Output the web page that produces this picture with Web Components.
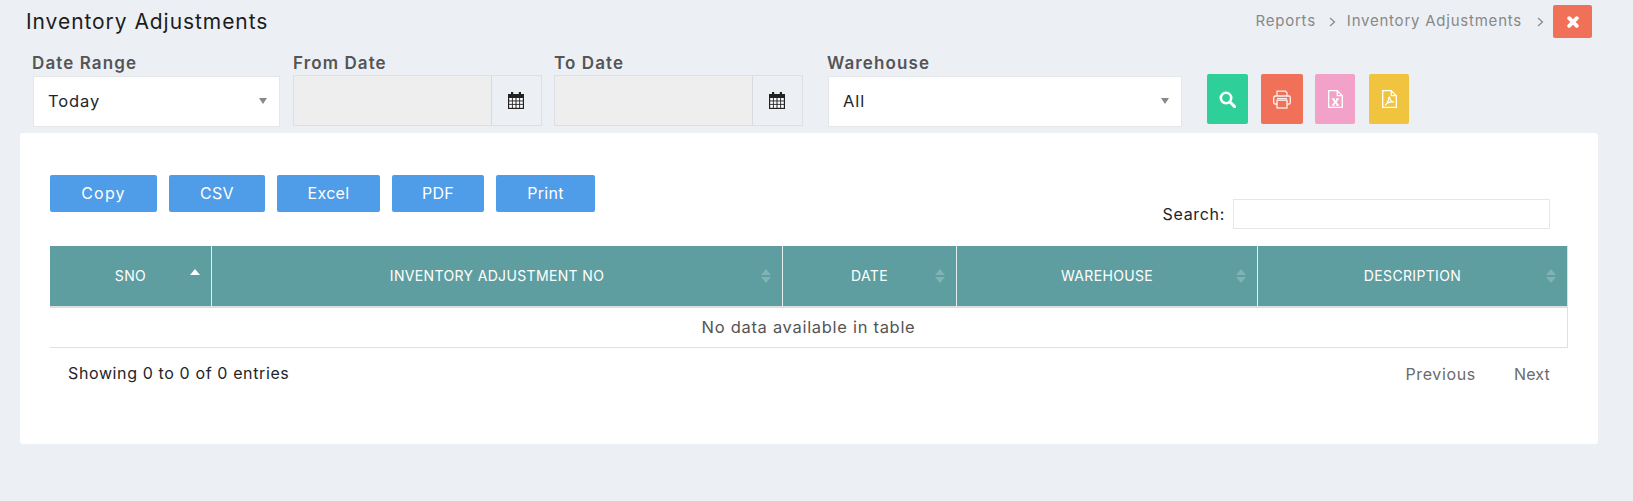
<!DOCTYPE html>
<html>
<head>
<meta charset="utf-8">
<title>Inventory Adjustments</title>
<style>
    html, body { margin: 0; padding: 0; background: #ecf0f5; }
    body { font-family: "Inter", "Noto Sans", sans-serif; width: 1633px; height: 501px; overflow: hidden; }
</style>
</head>
<body>
<page-header title-text="Inventory Adjustments"></page-header>
<filter-bar></filter-bar>
<report-card></report-card>

<script>
const ICONS = {
    calendar: `<svg width="16" height="17" viewBox="0 0 16 17"><path fill="#222" d="M3 0h2.200v3H3zM10.800 0H13v3h-2.200z"/><rect x="0" y="2" width="16" height="15" fill="#222"/><g fill="#fff"><rect x="1.200" y="6" width="2.700" height="2.500"/><rect x="4.800" y="6" width="2.700" height="2.500"/><rect x="8.500" y="6" width="2.700" height="2.500"/><rect x="12.100" y="6" width="2.700" height="2.500"/><rect x="1.200" y="9.400" width="2.700" height="2.500"/><rect x="4.800" y="9.400" width="2.700" height="2.500"/><rect x="8.500" y="9.400" width="2.700" height="2.500"/><rect x="12.100" y="9.400" width="2.700" height="2.500"/><rect x="1.200" y="12.800" width="2.700" height="3"/><rect x="4.800" y="12.800" width="2.700" height="3"/><rect x="8.500" y="12.800" width="2.700" height="3"/><rect x="12.100" y="12.800" width="2.700" height="3"/></g></svg>`,
    search: `<svg width="17" height="17" viewBox="0 0 17 17"><circle cx="7" cy="7" r="5.200" fill="none" stroke="#fff" stroke-width="2.600"/><path d="M10.800 10.800L15.600 15.600" stroke="#fff" stroke-width="3" stroke-linecap="round"/></svg>`,
    print: `<svg width="18" height="19" viewBox="0 0 18 19" fill="none" stroke="#fff" stroke-width="1.300" opacity=".9"><path d="M4 6V1.200h8.500L14 2.700V6"/><path d="M4 14H2a1.300 1.300 0 0 1-1.300-1.300V7.500A1.500 1.500 0 0 1 2.200 6h13.600a1.500 1.500 0 0 1 1.500 1.500v5.200A1.300 1.300 0 0 1 16 14h-2"/><rect x="4" y="10.200" width="10" height="7.800"/><path d="M4 8.600h10"/></svg>`,
    excel: `<svg width="15" height="18" viewBox="0 0 15 18" fill="none" stroke="#fff" stroke-width="1.300"><path d="M.7.7h8.600l5 5v11.600H.7z"/><path d="M9.300.7v5h5"/><path d="M5 9l4.800 6M9.800 9L5 15" stroke-width="1.900"/><path d="M3.800 8.800h3M8.100 8.800h3M3.800 15.200h3M8.100 15.200h3" stroke-width="1"/></svg>`,
    pdf: `<svg width="15" height="18" viewBox="0 0 15 18" fill="none" stroke="#fff" stroke-width="1.300"><path d="M.7.7h8.600l5 5v11.600H.7z"/><path d="M9.300.7v5h5"/><path d="M3 15.200c1.600-1 3.400-4.400 3.800-7.400.2-1.200 1-1 1 .2 0 2 1.500 3.600 4.200 4-2.700-.3-5.800.3-7.600 1.500" stroke-width="1.200"/></svg>`,
    times: `<svg width="12" height="12" viewBox="0 0 12 12"><path d="M2.200 2.200L9.800 9.800M9.800 2.200L2.200 9.800" stroke="#fff" stroke-width="3.800" stroke-linecap="round"/></svg>`
};

class PageHeader extends HTMLElement {
    constructor() {
        super()
        this.shadow = this.attachShadow({ mode: 'open' });
    }

    connectedCallback() {
        this.render();
    }

    render() {
        this.shadow.innerHTML = `
        <style>
            :host { display: flex; align-items: center; justify-content: space-between; height: 33px; padding: 5px 41px 0 26px; color: #212529; }
            .title { font-size: 21px; letter-spacing: .94px; color: #1c1c1c; }
            .crumbs { display: flex; align-items: center; font-size: 15px; color: #888; letter-spacing: .77px; }
            .crumbs span { padding-bottom: 2px; }
            .sep { width: 7px; height: 10px; margin: 0 11px 0 13px; }
            .sep-last { margin: 0 9px 0 15px; }
            .close { display: flex; align-items: center; justify-content: center; width: 39px; height: 33px; border-radius: 2px; background: #f07158; }
        </style>
        <span class="title">${this.getAttribute('title-text')}</span>
        <div class="crumbs">
            <span>Reports</span>
            <svg class="sep" viewBox="0 0 7 10"><path d="M1 1l4.500 4L1 9" fill="none" stroke="#888" stroke-width="1.200"/></svg>
            <span>Inventory Adjustments</span>
            <svg class="sep sep-last" viewBox="0 0 7 10"><path d="M1 1l4.500 4L1 9" fill="none" stroke="#888" stroke-width="1.200"/></svg>
            <div class="close">${ICONS.times}</div>
        </div>
        `;
    }
}

class FilterField extends HTMLElement {
    constructor() {
        super()
        this.shadow = this.attachShadow({ mode: 'open' });
    }

    connectedCallback() {
        this.render();
    }

    render() {
        const type = this.getAttribute('data-type');
        const value = this.getAttribute('data-value') || '';
        const body = type == 'select' ? `
            <div class="select">
                <span>${value}</span>
                <i class="caret"></i>
            </div>` : `
            <div class="date">
                <div class="input"></div>
                <div class="addon">${ICONS.calendar}</div>
            </div>`;

        this.shadow.innerHTML = `
        <style>
            :host { display: block; }
            label { display: block; height: 22px; line-height: 21px; font-size: 17px; font-weight: 600; color: #555; letter-spacing: 1.100px; }
            .select { box-sizing: border-box; display: flex; align-items: center; justify-content: space-between; height: 51px; margin: 1px 0 0 1px; padding: 0 12px 2px 14px; background: #fff; border: 1px solid #e4e6ea; font-size: 16.500px; color: #212529; letter-spacing: .9px; }
            .caret { width: 0; height: 0; border: 4px solid transparent; border-top: 6px solid #888; border-bottom: 0; }
            .date { box-sizing: border-box; display: flex; height: 51px; border: 1px solid #dcdfe3; }
            .input { flex: 1; background: #eee; }
            .addon { box-sizing: content-box; display: flex; align-items: center; justify-content: center; width: 48px; padding-right: 1px; border-left: 1px solid #d8dade; }
        </style>
        <label>${this.getAttribute('data-label')}</label>
        ${body}
        `;
    }
}

class IconButton extends HTMLElement {
    constructor() {
        super()
        this.shadow = this.attachShadow({ mode: 'open' });
    }

    connectedCallback() {
        this.render();
    }

    render() {
        this.shadow.innerHTML = `
        <style>
            :host { display: flex; align-items: center; justify-content: center; height: 50px; border-radius: 2px; }
            svg { display: block; }
        </style>
        ${ICONS[this.getAttribute('data-icon')]}
        `;
    }
}

class FilterBar extends HTMLElement {
    constructor() {
        super()
        this.shadow = this.attachShadow({ mode: 'open' });
    }

    connectedCallback() {
        this.render();
    }

    render() {
        this.shadow.innerHTML = `
        <style>
            :host { display: flex; align-items: flex-start; height: 80px; padding: 15px 0 0 32px; }
            .buttons { display: flex; margin: 21px 0 0 25px; }
            .buttons icon-button:nth-child(1) { width: 41px; margin-right: 13px; background: #2fcf9a; }
            .buttons icon-button:nth-child(2) { width: 42px; margin-right: 12px; background: #f07158; }
            .buttons icon-button:nth-child(3) { width: 40px; margin-right: 14px; background: #f2a2c8; }
            .buttons icon-button:nth-child(4) { width: 40px; background: #f0c43f; }
        </style>
        <filter-field style="width: 248px; margin-right: 13px" data-type="select" data-label="Date Range" data-value="Today"></filter-field>
        <filter-field style="width: 249px; margin-right: 12px" data-type="date" data-label="From Date"></filter-field>
        <filter-field style="width: 249px; margin-right: 24px" data-type="date" data-label="To Date"></filter-field>
        <filter-field style="width: 355px" data-type="select" data-label="Warehouse" data-value="All"></filter-field>
        <div class="buttons">
            <icon-button data-icon="search"></icon-button>
            <icon-button data-icon="print"></icon-button>
            <icon-button data-icon="excel"></icon-button>
            <icon-button data-icon="pdf"></icon-button>
        </div>
        `;
    }
}

class DataTable extends HTMLElement {
    constructor() {
        super()
        this.shadow = this.attachShadow({ mode: 'open' });
    }

    connectedCallback() {
        this.render();
    }

    render() {
        const columns = [
            ['SNO', 161], ['INVENTORY ADJUSTMENT NO', 571], ['DATE', 174], ['WAREHOUSE', 301], ['DESCRIPTION', 311]
        ];
        const heads = columns.map((c, i) => `
            <th style="width: ${c[1]}px">${c[0]}
                <span class="sort ${i == 0 ? 'active' : ''}"><i class="up"></i><i class="down"></i></span>
            </th>`).join('');

        this.shadow.innerHTML = `
        <style>
            :host { display: block; }
            table { width: 1518px; table-layout: fixed; border-collapse: separate; border-spacing: 0; }
            th { position: relative; box-sizing: border-box; height: 60px; padding: 0 0 2px; background: #5f9ea0; color: #fff; font-size: 14px; font-weight: 400; text-align: center; border-left: 1px solid #e4eeee; letter-spacing: .35px; }
            th:first-child { border-left: 0; }
            th:last-child { border-right: 1px solid #dcdee0; }
            td { box-sizing: content-box; height: 37px; padding: 0 0 2px; text-align: center; font-size: 16.500px; color: #555; border-top: 2px solid #dddfe2; border-right: 1px solid #dddfe2; border-bottom: 1px solid #dddfe2; letter-spacing: .7px; }
            .sort { position: absolute; right: 11px; top: 23px; display: flex; flex-direction: column; row-gap: 2px; }
            .sort i { display: block; width: 0; height: 0; border-left: 5.500px solid transparent; border-right: 5.500px solid transparent; }
            .up { border-bottom: 6px solid #7fb3b4; }
            .down { border-top: 6px solid #7fb3b4; }
            .active .up { border-bottom-color: #fff; }
            .active .down { border-top-color: transparent; }
        </style>
        <table>
            <thead><tr>${heads}</tr></thead>
            <tbody><tr><td colspan="5">No data available in table</td></tr></tbody>
        </table>
        `;
    }
}

class ReportCard extends HTMLElement {
    constructor() {
        super()
        this.shadow = this.attachShadow({ mode: 'open' });
    }

    connectedCallback() {
        this.render();
    }

    render() {
        this.shadow.innerHTML = `
        <style>
            :host { display: block; box-sizing: border-box; width: 1578px; height: 311px; margin-left: 20px; padding: 42px 0 0 30px; background: #fff; border-radius: 3px; color: #212529; }
            .tools { display: flex; justify-content: space-between; align-items: flex-start; width: 1500px; height: 71px; }
            .btns { display: flex; column-gap: 12px; }
            .btn { box-sizing: border-box; display: flex; align-items: center; justify-content: center; height: 37px; padding-bottom: 2px; background: #4f9ce8; border-radius: 2px; color: #fff; font-size: 16px; letter-spacing: .3px; }
            .search { display: flex; align-items: center; column-gap: 8px; margin-top: 24px; font-size: 16px; letter-spacing: .68px; }
            .search .box { box-sizing: border-box; width: 317px; height: 30px; background: #fff; border: 1px solid #e4e6ea; }
            .foot { display: flex; justify-content: space-between; width: 1500px; padding: 15px 0 0 18px; box-sizing: border-box; font-size: 16px; letter-spacing: .62px; }
            .pages { display: flex; column-gap: 38px; padding-top: 1px; color: #6b6b6b; letter-spacing: .64px; }
            .next { letter-spacing: .2px; }
        </style>
        <div class="tools">
            <div class="btns">
                <div class="btn" style="width: 107px; letter-spacing: 1.200px">Copy</div>
                <div class="btn" style="width: 96px">CSV</div>
                <div class="btn" style="width: 103px">Excel</div>
                <div class="btn" style="width: 92px">PDF</div>
                <div class="btn" style="width: 99px">Print</div>
            </div>
            <div class="search"><span>Search:</span><div class="box"></div></div>
        </div>
        <data-table></data-table>
        <div class="foot">
            <span>Showing 0 to 0 of 0 entries</span>
            <div class="pages"><span>Previous</span><span class="next">Next</span></div>
        </div>
        `;
    }
}

customElements.get('page-header') || customElements.define('page-header', PageHeader);
customElements.get('filter-field') || customElements.define('filter-field', FilterField);
customElements.get('icon-button') || customElements.define('icon-button', IconButton);
customElements.get('filter-bar') || customElements.define('filter-bar', FilterBar);
customElements.get('data-table') || customElements.define('data-table', DataTable);
customElements.get('report-card') || customElements.define('report-card', ReportCard);
</script>
</body>
</html>
